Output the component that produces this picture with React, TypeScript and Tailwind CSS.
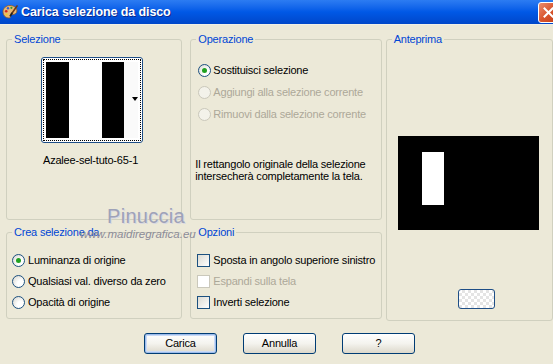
import React from "react";

type RadioProps = { checked?: boolean; disabled?: boolean };

const Radio: React.FC<RadioProps> = ({ checked, disabled }) => {
  if (disabled) {
    return <span className="w-[13px] h-[13px] rounded-full border border-[#CAC8BB] bg-[#F3F2EA] shrink-0" />;
  }
  return (
    <span className="w-[13px] h-[13px] rounded-full border border-[#1C5180] bg-[radial-gradient(circle_at_70%_70%,#ffffff_30%,#D4D3CA_100%)] shrink-0 flex items-center justify-center">
      {checked ? <span className="w-[5px] h-[5px] rounded-full bg-[#21A121]" /> : null}
    </span>
  );
};

const Check: React.FC<{ disabled?: boolean }> = ({ disabled }) =>
  disabled ? (
    <span className="w-[13px] h-[13px] border border-[#CAC8BB] bg-white shrink-0" />
  ) : (
    <span className="w-[13px] h-[13px] border border-[#1C5180] bg-linear-to-br from-[#DCDBD3] to-white shrink-0" />
  );

type GroupProps = { label: string; className: string; children?: React.ReactNode };

const Group: React.FC<GroupProps> = ({ label, className, children }) => (
  <fieldset className={`border border-[#D0D0BF] rounded-[3px] ${className}`}>
    <legend className="ml-[5px] px-[2px] leading-[12px] text-[#0046D5]">{label}</legend>
    {children}
  </fieldset>
);

const Option: React.FC<{ text: string; disabled?: boolean; children: React.ReactNode }> = ({ text, disabled, children }) => (
  <div className="h-[21px] flex items-center gap-[3px]">
    {children}
    <span className={disabled ? "text-[#ACA899]" : "text-black"}>{text}</span>
  </div>
);

const XpButton: React.FC<{ label: string; focused?: boolean }> = ({ label, focused }) => (
  <button
    className={`w-[73px] h-[21px] rounded-[3px] border border-[#003C74] bg-linear-to-b from-white via-[#F4F3EE] to-[#DCD8CB] text-black ${
      focused ? "shadow-[inset_0_0_0_1px_#9DBCEB,inset_0_0_0_2px_#C9DAF6]" : ""
    }`}
  >
    {label}
  </button>
);

const PaletteIcon = () => (
  <svg width="16" height="16" viewBox="0 0 16 16">
    <path d="M8 1.5C4 1.5 1 4.2 1 7.8c0 3.4 2.6 6.2 6 6.2 1.4 0 1.6-1 1.1-1.8-.5-.8 0-1.7 1-1.7h1.6c2.3 0 4.2-1.5 4.2-3.6C14.9 3.7 11.8 1.5 8 1.5z" fill="#E9B873" stroke="#8A5A2B" strokeWidth="0.8" />
    <circle cx="4.2" cy="7.2" r="1.3" fill="#D52A1E" />
    <circle cx="6" cy="4.3" r="1.2" fill="#2F5FD8" />
    <circle cx="9.4" cy="3.8" r="1.1" fill="#2E9B35" />
    <circle cx="4.6" cy="10.5" r="1.1" fill="#F0D020" />
    <path d="M15 2 9.6 9.8" stroke="#6B3A16" strokeWidth="1.6" strokeLinecap="round" />
    <path d="M9.8 9.4 8.6 11.6" stroke="#222" strokeWidth="1.8" strokeLinecap="round" />
  </svg>
);

export default function App() {
  return (
    <div className="relative w-[553px] h-[364px] overflow-hidden bg-[#ECE9D8] text-[11px] tracking-[-0.2px] font-['Liberation_Sans',Arial,sans-serif]">
      {/* title bar */}
      <div className="h-[25px] flex items-center bg-linear-to-b from-[#2C7CF2] via-[#0058E6] to-[#0047C9] border-b border-[#F2F0E6]">
        <div className="ml-[2px]">
          <PaletteIcon />
        </div>
        <span className="ml-[3px] text-white font-bold text-[12.5px] tracking-[-0.1px] [text-shadow:1px_1px_#0B2A8F]">
          Carica selezione da disco
        </span>
        <div className="ml-auto mr-[-6px] w-[21px] h-[21px] rounded-[3px] border border-white bg-linear-to-br from-[#EB8D6E] via-[#D9552D] to-[#C23D17] flex items-center justify-center">
          <svg width="11" height="11" viewBox="0 0 11 11">
            <path d="M1.5 1.5l8 8M9.5 1.5l-8 8" stroke="white" strokeWidth="2" strokeLinecap="square" />
          </svg>
        </div>
      </div>

      <div className="pt-[8px] flex items-start">
        {/* left column */}
        <div className="ml-[6px] w-[177px] flex flex-col">
          <Group label="Selezione" className="h-[187px]">
            <div className="mt-[12px] ml-[34px] w-[102px] h-[86px] rounded-[3px] border border-[#1E4E86] bg-white p-[1px]">
              <div className="relative w-full h-full border border-dotted border-black p-[2px]">
                <div className="w-full h-full flex">
                  <div className="w-[23px] bg-black" />
                  <div className="w-[33px] bg-white" />
                  <div className="w-[22px] bg-black" />
                  <div className="flex-1 bg-[#FAFAFA]" />
                </div>
                <span className="absolute right-[2px] top-[37px] w-0 h-0 border-l-[3px] border-r-[3px] border-t-[4px] border-l-transparent border-r-transparent border-t-black" />
              </div>
            </div>
            <p className="mt-[11px] ml-[36px] leading-[13px] text-black">Azalee-sel-tuto-65-1</p>
          </Group>
          <Group label="Crea selezione da" className="mt-[6px] h-[93px]">
            <div className="mt-[12px] ml-[5px]">
              <Option text="Luminanza di origine">
                <Radio checked />
              </Option>
              <Option text="Qualsiasi val. diverso da zero">
                <Radio />
              </Option>
              <Option text="Opacità di origine">
                <Radio />
              </Option>
            </div>
          </Group>
        </div>

        {/* middle column */}
        <div className="ml-[8px] w-[192px] flex flex-col">
          <Group label="Operazione" className="h-[187px]">
            <div className="mt-[14px] ml-[7px]">
              <div className="h-[22px] flex items-center gap-[2px]">
                <Radio checked />
                <span>Sostituisci selezione</span>
              </div>
              <div className="h-[22px] flex items-center gap-[2px]">
                <Radio disabled />
                <span className="text-[#ACA899]">Aggiungi alla selezione corrente</span>
              </div>
              <div className="h-[22px] flex items-center gap-[2px]">
                <Radio disabled />
                <span className="text-[#ACA899]">Rimuovi dalla selezione corrente</span>
              </div>
            </div>
            <p className="mt-[33px] ml-[4px] leading-[12px] text-black">
              Il rettangolo originale della selezione
              <br />
              intersecherà completamente la tela.
            </p>
          </Group>
          <Group label="Opzioni" className="mt-[6px] h-[93px]">
            <div className="mt-[12px] ml-[6px]">
              <Option text="Sposta in angolo superiore sinistro">
                <Check />
              </Option>
              <Option text="Espandi sulla tela" disabled>
                <Check disabled />
              </Option>
              <Option text="Inverti selezione">
                <Check />
              </Option>
            </div>
          </Group>
        </div>

        {/* right column */}
        <div className="ml-[4px] w-[168px]">
          <Group label="Anteprima" className="h-[288px]">
            <div className="mt-[91px] ml-[11px] w-[141px] h-[94px] bg-black pt-[16px] pl-[24px]">
              <div className="w-[22px] h-[53px] bg-white" />
            </div>
            <div className="mt-[59px] ml-[71px] w-[37px] h-[20px] rounded-[3px] border border-[#1E4E86] bg-[image:repeating-conic-gradient(#E4E4E4_0_25%,#FFFFFF_0_50%)] bg-[length:6px_6px]" />
          </Group>
        </div>
      </div>

      {/* buttons */}
      <div className="mt-[12px] ml-[144px] flex gap-[26px]">
        <XpButton label="Carica" focused />
        <XpButton label="Annulla" />
        <XpButton label="?" />
      </div>

      {/* watermark */}
      <span className="absolute left-[107px] top-[201px] text-[20px] tracking-[0.3px] text-[#9EA2B8] [text-shadow:1px_1px_#D8D8E2]">
        Pinuccia
      </span>
      <span className="absolute left-[80px] top-[226px] text-[11.5px] italic tracking-[0px] text-[#8C8C98]">
        www.maidiregrafica.eu
      </span>
    </div>
  );
}
